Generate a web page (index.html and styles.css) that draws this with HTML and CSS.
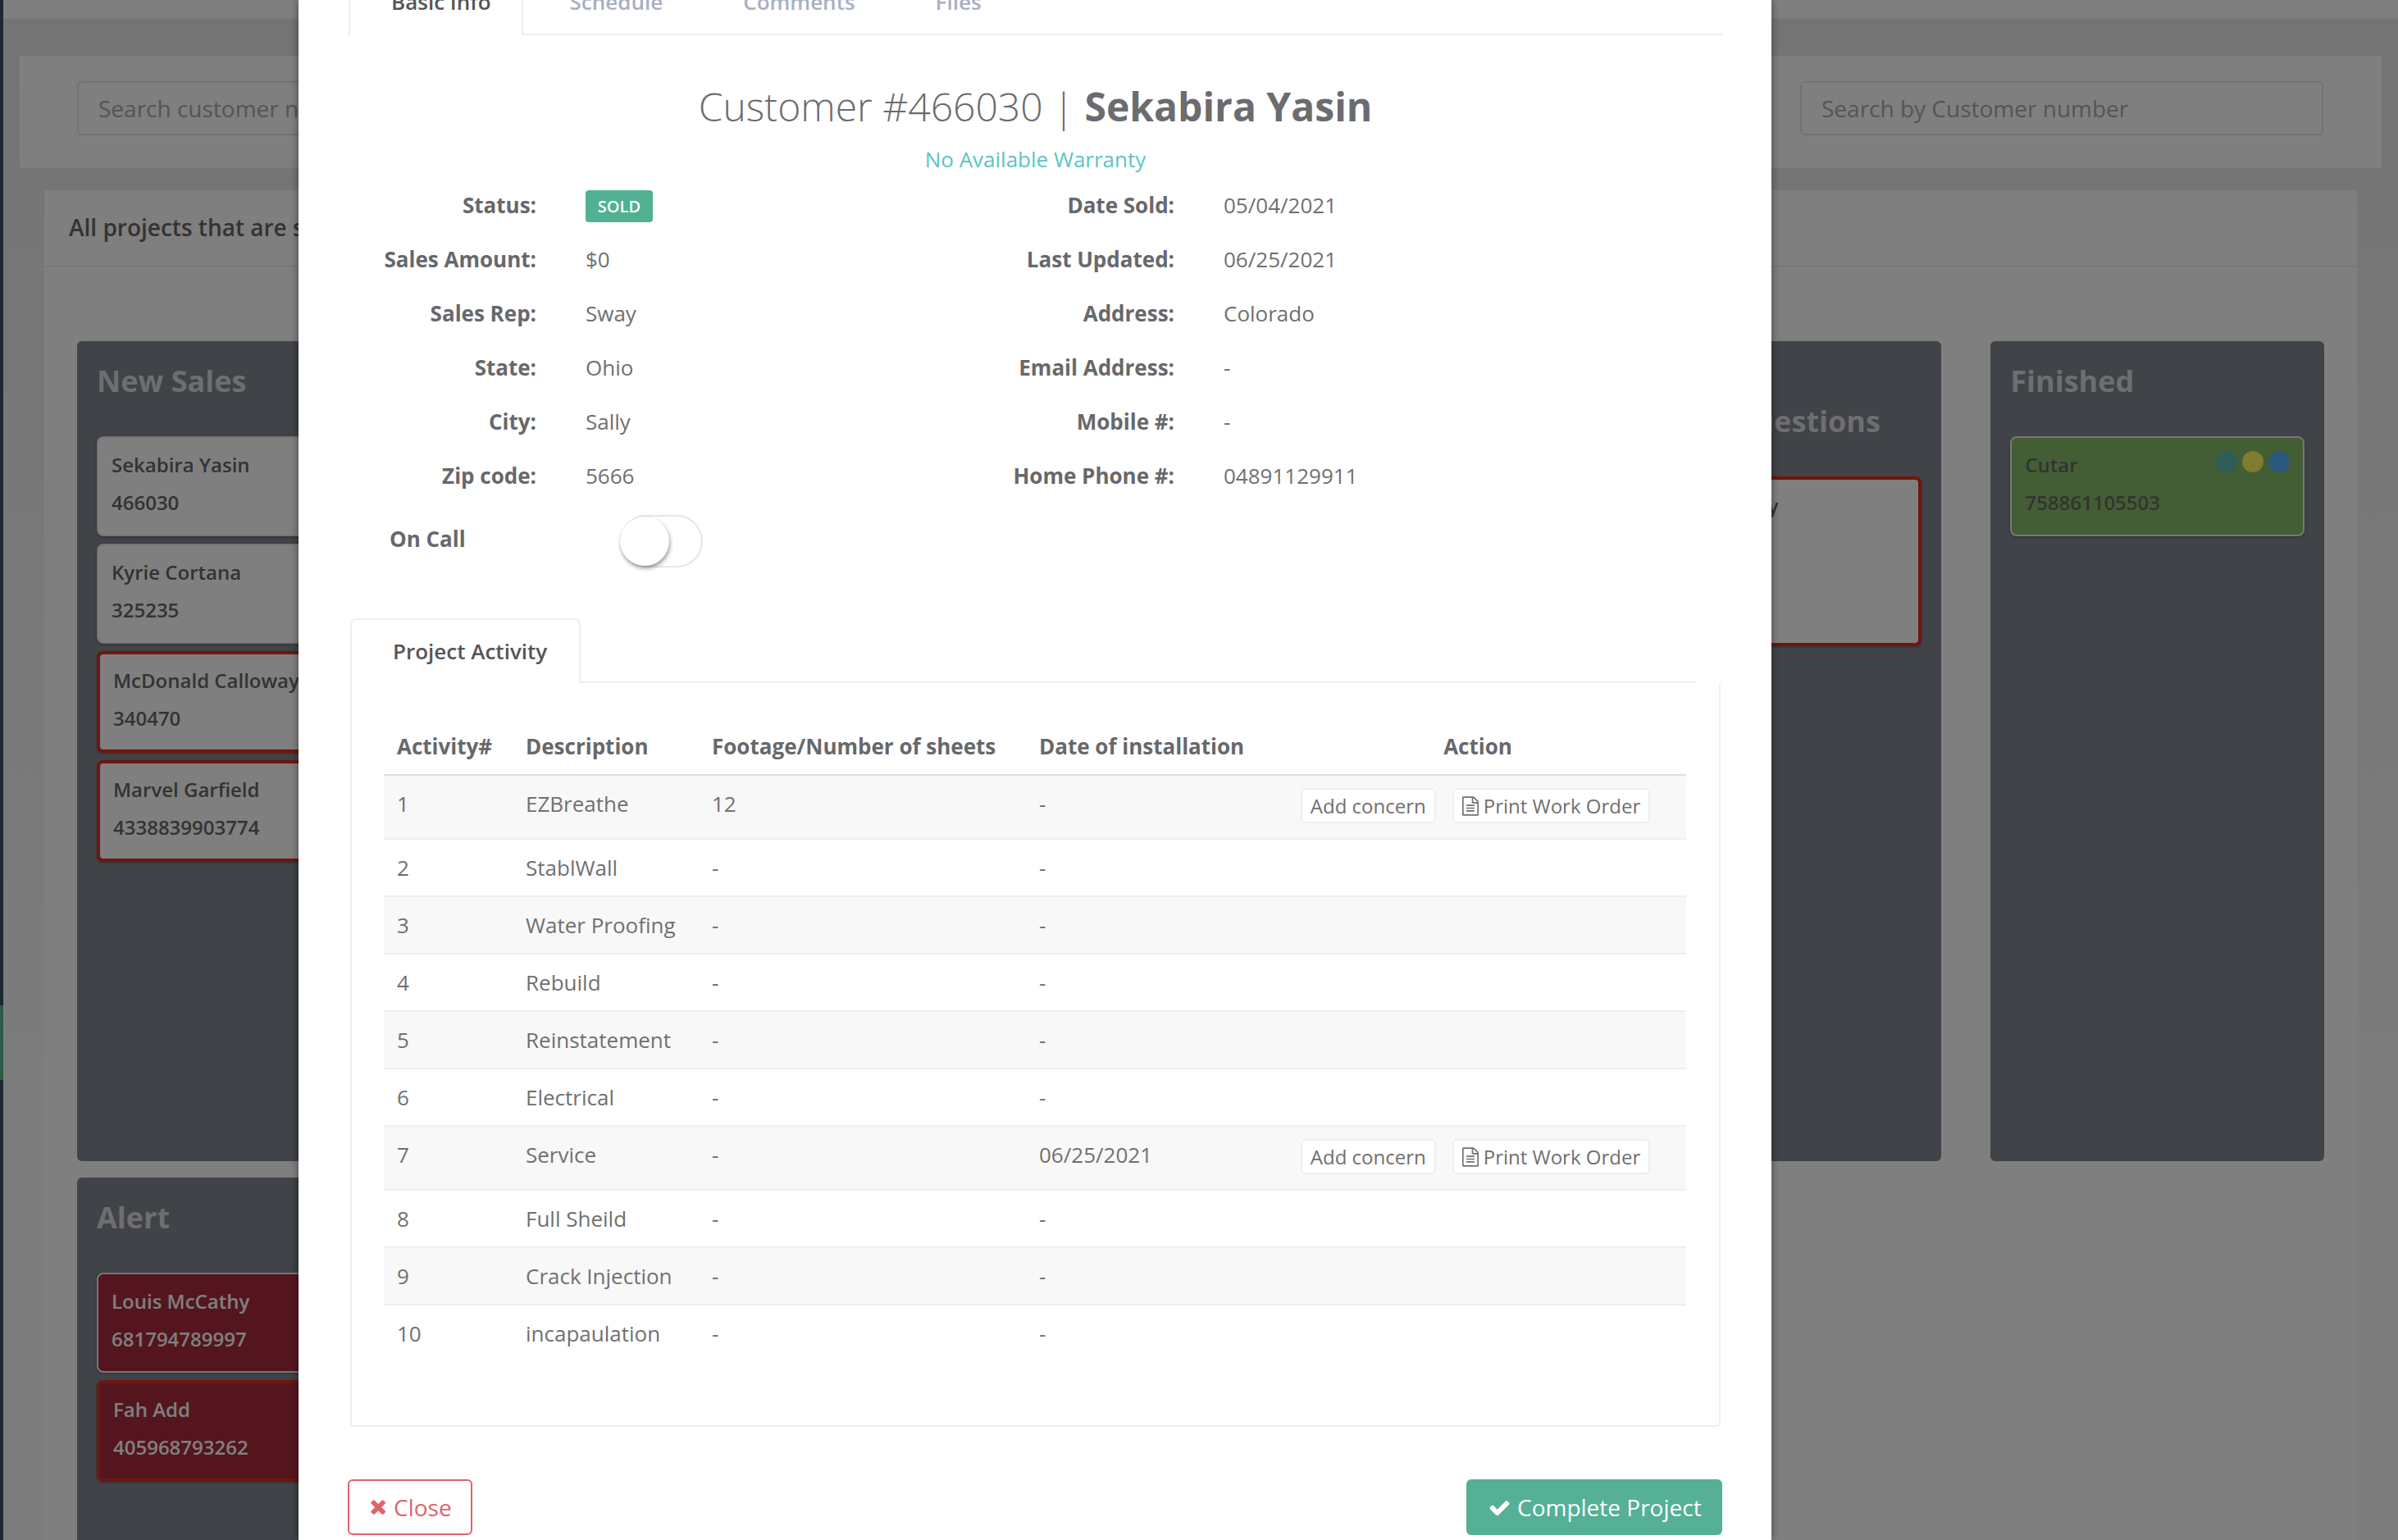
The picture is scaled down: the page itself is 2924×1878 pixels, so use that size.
FILE: index.html
```html
<!DOCTYPE html>
<html lang="en">
<head>
  <meta charset="UTF-8">
  <title>Projects</title>
  <link rel="stylesheet" href="styles.css">
</head>
<body>
  <div class="sidebar"><div class="sidebar-active"></div></div>
  <div class="content">
    <div class="topbar"></div>
    <div class="search-panel">
      <input class="search-input" type="text" placeholder="Search customer name">
      <input class="search-input" type="text" placeholder="Search by Customer number">
    </div>
    <div class="board-panel">
      <div class="board-header">All projects that are sold</div>
      <div class="board">
        <div class="column">
          <h3>New Sales</h3>
          <div class="card"><p>Sekabira Yasin</p><p>466030</p></div>
          <div class="card"><p>Kyrie Cortana</p><p>325235</p></div>
          <div class="card card-late"><p>McDonald Calloway</p><p>340470</p></div>
          <div class="card card-late"><p>Marvel Garfield</p><p>4338839903774</p></div>
        </div>
        <div class="column col-questions">
          <h3>Open<br>Repair Questions</h3>
          <div class="card card-late card-tall"><p>Jimmy Murray</p></div>
        </div>
        <div class="column col-finished">
          <h3>Finished</h3>
          <div class="card card-done">
            <div class="dots"><span class="dot dot-teal"></span><span class="dot dot-yellow"></span><span class="dot dot-blue"></span></div>
            <p>Cutar</p><p>758861105503</p>
          </div>
        </div>
        <div class="column col-alert">
          <h3>Alert</h3>
          <div class="card card-alert"><p>Louis McCathy</p><p>681794789997</p></div>
          <div class="card card-alert card-late"><p>Fah Add</p><p>405968793262</p></div>
        </div>
      </div>
    </div>
  </div>

  <div class="backdrop">
    <div class="modal">
      <ul class="tabs">
        <li class="tab active">Basic Info</li>
        <li class="tab">Schedule</li>
        <li class="tab">Comments</li>
        <li class="tab">Files</li>
      </ul>

      <h2 class="customer-title">Customer #466030 | <strong>Sekabira Yasin</strong></h2>
      <p class="warranty">No Available Warranty</p>

      <div class="info">
        <div class="info-row"><span class="info-label">Status:</span><span class="badge">SOLD</span></div>
        <div class="info-row"><span class="info-label">Date Sold:</span><span>05/04/2021</span></div>
        <div class="info-row"><span class="info-label">Sales Amount:</span><span>$0</span></div>
        <div class="info-row"><span class="info-label">Last Updated:</span><span>06/25/2021</span></div>
        <div class="info-row"><span class="info-label">Sales Rep:</span><span>Sway</span></div>
        <div class="info-row"><span class="info-label">Address:</span><span>Colorado</span></div>
        <div class="info-row"><span class="info-label">State:</span><span>Ohio</span></div>
        <div class="info-row"><span class="info-label">Email Address:</span><span>-</span></div>
        <div class="info-row"><span class="info-label">City:</span><span>Sally</span></div>
        <div class="info-row"><span class="info-label">Mobile #:</span><span>-</span></div>
        <div class="info-row"><span class="info-label">Zip code:</span><span>5666</span></div>
        <div class="info-row"><span class="info-label">Home Phone #:</span><span>04891129911</span></div>
      </div>

      <div class="on-call">
        <span class="on-call-label">On Call</span>
        <span class="switch"><span class="knob"></span></span>
      </div>

      <div class="activity-tabs"><div class="activity-tab">Project Activity</div></div>
      <div class="activity-panel">
        <table class="activity">
          <thead>
            <tr><th class="c-num">Activity#</th><th class="c-desc">Description</th><th class="c-foot">Footage/Number of sheets</th><th class="c-date">Date of installation</th><th class="c-action">Action</th></tr>
          </thead>
          <tbody>
            <tr>
              <td>1</td><td>EZBreathe</td><td>12</td><td>-</td>
              <td class="c-action"><div class="actions">
                <span class="btn-small">Add concern</span>
                <span class="btn-small"><svg class="icon-file" viewBox="128 0 1536 1792"><path d="M1596 380q28 28 48 76t20 88v1152q0 40-28 68t-68 28h-1344q-40 0-68-28t-28-68v-1600q0-40 28-68t68-28h896q40 0 88 20t76 48zm-444-244v376h376q-10-29-22-41l-313-313q-12-12-41-22zm384 1528v-1024h-416q-40 0-68-28t-28-68v-416h-768v1536h1280zm-1024-864q0-14 9-23t23-9h704q14 0 23 9t9 23v64q0 14-9 23t-23 9h-704q-14 0-23-9t-9-23v-64zm736 224q14 0 23 9t9 23v64q0 14-9 23t-23 9h-704q-14 0-23-9t-9-23v-64q0-14 9-23t23-9h704zm0 256q14 0 23 9t9 23v64q0 14-9 23t-23 9h-704q-14 0-23-9t-9-23v-64q0-14 9-23t23-9h704z"/></svg>Print Work Order</span>
              </div></td>
            </tr>
            <tr><td>2</td><td>StablWall</td><td>-</td><td>-</td><td></td></tr>
            <tr><td>3</td><td>Water Proofing</td><td>-</td><td>-</td><td></td></tr>
            <tr><td>4</td><td>Rebuild</td><td>-</td><td>-</td><td></td></tr>
            <tr><td>5</td><td>Reinstatement</td><td>-</td><td>-</td><td></td></tr>
            <tr><td>6</td><td>Electrical</td><td>-</td><td>-</td><td></td></tr>
            <tr>
              <td>7</td><td>Service</td><td>-</td><td>06/25/2021</td>
              <td class="c-action"><div class="actions">
                <span class="btn-small">Add concern</span>
                <span class="btn-small"><svg class="icon-file" viewBox="128 0 1536 1792"><path d="M1596 380q28 28 48 76t20 88v1152q0 40-28 68t-68 28h-1344q-40 0-68-28t-28-68v-1600q0-40 28-68t68-28h896q40 0 88 20t76 48zm-444-244v376h376q-10-29-22-41l-313-313q-12-12-41-22zm384 1528v-1024h-416q-40 0-68-28t-28-68v-416h-768v1536h1280zm-1024-864q0-14 9-23t23-9h704q14 0 23 9t9 23v64q0 14-9 23t-23 9h-704q-14 0-23-9t-9-23v-64zm736 224q14 0 23 9t9 23v64q0 14-9 23t-23 9h-704q-14 0-23-9t-9-23v-64q0-14 9-23t23-9h704zm0 256q14 0 23 9t9 23v64q0 14-9 23t-23 9h-704q-14 0-23-9t-9-23v-64q0-14 9-23t23-9h704z"/></svg>Print Work Order</span>
              </div></td>
            </tr>
            <tr><td>8</td><td>Full Sheild</td><td>-</td><td>-</td><td></td></tr>
            <tr><td>9</td><td>Crack Injection</td><td>-</td><td>-</td><td></td></tr>
            <tr><td>10</td><td>incapaulation</td><td>-</td><td>-</td><td></td></tr>
          </tbody>
        </table>
      </div>

      <div class="modal-footer">
        <span class="btn btn-close"><svg class="icon-times" viewBox="214 352 1276 1202"><path d="M1490 1322q0 40-28 68l-136 136q-28 28-68 28t-68-28l-294-294-294 294q-28 28-68 28t-68-28l-136-136q-28-28-28-68t28-68l294-294-294-294q-28-28-28-68t28-68l136-136q28-28 68-28t68 28l294 294 294-294q28-28 68-28t68 28l136 136q28 28 28 68t-28 68l-294 294 294 294q28 28 28 68z"/></svg>Close</span>
        <span class="btn btn-complete"><svg class="icon-check" viewBox="121 270 1550 1216"><path d="M1671 566q0 40-28 68l-724 724-136 136q-28 28-68 28t-68-28l-136-136-362-362q-28-28-28-68t28-68l136-136q28-28 68-28t68 28l294 295 656-657q28-28 68-28t68 28l136 136q28 28 28 68z"/></svg>Complete Project</span>
      </div>
    </div>
  </div>
</body>
</html>
```

FILE: styles.css
```css
* {
  box-sizing: border-box;
}
body {
  margin: 0;
  width: 2924px;
  height: 1878px;
  overflow: hidden;
  display: flex;
  position: relative;
  font-family: "Open Sans", sans-serif;
  font-size: 26px;
  color: #666;
  background: #fff;
}

/* page behind the modal */
.sidebar {
  width: 4px;
  flex: none;
  background: #3f5064;
}
.sidebar-active {
  margin-top: 1226px;
  height: 91px;
  background: #57b98c;
}
.content {
  flex: 1;
  min-width: 0;
  height: 1878px;
  overflow: hidden;
  background: linear-gradient(#e8e8e8, #f8f8f8 70%);
}
.topbar {
  height: 24px;
  background: #fff;
  border-bottom: 2px solid #eee;
}
.search-panel {
  margin: 44px 20px 0;
  height: 138px;
  padding: 31px 71px 0 70px;
  display: flex;
  justify-content: space-between;
  background: #fff;
  border: 2px solid #f2f2f2;
  border-width: 0 0 2px;
}
.search-input {
  width: 638px;
  height: 66px;
  padding: 0 24px;
  font: 28px "Open Sans", sans-serif;
  color: #666;
  background: #fff;
  border: 2px solid #e4e4e4;
  border-radius: 6px;
}
.search-input::placeholder {
  color: #aaa;
  opacity: 1;
}
.board-panel {
  margin: 26px 50px 0;
  height: 1646px;
  overflow: hidden;
  background: #fff;
}
.board-header {
  height: 94px;
  padding: 26px 30px 0;
  font-size: 28px;
  font-weight: 600;
  line-height: 38px;
  color: #666;
  border-bottom: 2px solid #eee;
}
.board {
  margin-top: 90px;
  padding: 0 40px;
  display: grid;
  grid-template-columns: repeat(6, 1fr);
  grid-template-rows: 1000px 442px;
  gap: 20px 60px;
}
.column {
  padding: 24px;
  background: #81868e;
  border-radius: 6px;
}
.col-questions { grid-column: 5; }
.col-finished { grid-column: 6; }
.col-alert {
  grid-column: 1;
  grid-row: 2;
  border-radius: 6px 6px 0 0;
}
.column h3 {
  margin: 0 0 43px;
  font-size: 36px;
  font-weight: 700;
  line-height: 49px;
  color: #dcdde0;
}
.card {
  position: relative;
  height: 122px;
  margin-bottom: 9px;
  padding: 10px 16px;
  font-size: 24px;
  font-weight: 600;
  color: #666;
  background: #fff;
  border: 2px solid #e8e8e8;
  border-radius: 8px;
  box-shadow: 0 1px 3px rgba(0,0,0,0.3);
}
.card p {
  margin: 0;
  line-height: 46px;
}
.card-late {
  padding-top: 9px;
  border: 4px solid #e02a1e;
  height: 124px;
}
.card-tall {
  height: 207px;
}
.card-done {
  background: #87bd69;
  border-color: #eee;
}
.card-alert {
  color: #fff;
  background: #a82a3c;
  border-color: #eee;
}
.card-alert.card-late {
  border-color: #e02a1e;
}
.dots {
  position: absolute;
  top: 16px;
  right: 16px;
  display: flex;
  gap: 6px;
}
.dot {
  width: 26px;
  height: 26px;
  border-radius: 50%;
}
.dot-teal { background: #56beb0; }
.dot-yellow { background: #fcf85e; }
.dot-blue { background: #56b0ff; }

/* modal */
.backdrop {
  position: absolute;
  top: 0;
  left: 0;
  width: 100%;
  height: 100%;
  background: rgba(0,0,0,0.5);
}
.modal {
  width: 1796px;
  height: 100%;
  margin-left: 364px;
  padding: 0 60px 0 61px;
  overflow: hidden;
  background: #fff;
  box-shadow: 0 0 10px rgba(0,0,0,0.45);
}
.tabs {
  margin: -17px 0 0;
  padding: 0;
  list-style: none;
  display: flex;
  border-bottom: 2px solid #eee;
}
.tab {
  padding: 0 49px 20px;
  font-size: 26px;
  font-weight: 600;
  line-height: 38px;
  color: #a8afc2;
}
.tab.active {
  margin-bottom: -2px;
  padding: 0 37px 20px 50px;
  margin-right: 8px;
  color: #555;
  background: #fff;
  border: 2px solid #eee;
  border-width: 0 2px;
}
.customer-title {
  margin: 54px 0 10px;
  font-size: 48px;
  font-weight: 300;
  line-height: 66px;
  text-align: center;
  color: #6b6c6f;
}
.customer-title strong {
  font-weight: 700;
}
.warranty {
  margin: 0;
  font-size: 26px;
  line-height: 42px;
  text-align: center;
  color: #5cc4c4;
}
.info {
  margin-top: 2px;
  display: grid;
  grid-template-columns: 778px 1fr;
}
.info-row {
  height: 66px;
  display: flex;
  align-items: center;
  color: #707070;
}
.info-label {
  width: 229px;
  margin-right: 60px;
  font-weight: 700;
  text-align: right;
  color: #67686b;
}
.badge {
  width: 82px;
  height: 39px;
  margin-top: 3px;
  font-size: 20px;
  font-weight: 600;
  line-height: 39px;
  text-align: center;
  color: #fff;
  background: #52b193;
  border-radius: 4px;
}
.on-call {
  margin-top: 15px;
  height: 64px;
  display: flex;
  align-items: center;
}
.on-call-label {
  width: 331px;
  padding: 0 0 6px 50px;
  font-weight: 700;
  color: #67686b;
}
.switch {
  width: 101px;
  height: 64px;
  padding: 2px 0 0 1px;
  background: #fff;
  border: 2px solid #e6e6e6;
  border-radius: 32px;
}
.knob {
  display: block;
  width: 60px;
  height: 60px;
  margin: -2px 0 0 -3px;
  background: #fff;
  border-radius: 50%;
  box-shadow: 1px 3px 5px rgba(0,0,0,0.4);
}
.activity-tabs {
  margin: 62px 32px 0 2px;
  border-bottom: 2px solid #eee;
}
.activity-tab {
  width: 281px;
  height: 79px;
  margin-bottom: -2px;
  padding-left: 50px;
  font-weight: 600;
  line-height: 76px;
  color: #555;
  background: #fff;
  border: 2px solid #eee;
  border-bottom: 0;
  border-radius: 8px 8px 0 0;
}
.activity-panel {
  margin: 0 2px;
  height: 907px;
  padding: 43px 40px 0 39px;
  border: 2px solid #eee;
  border-top: 0;
  border-radius: 0 0 4px 4px;
}
.activity {
  width: 100%;
  table-layout: fixed;
  border-collapse: separate;
  border-spacing: 0;
}
.c-num { width: 157px; }
.c-desc { width: 227px; }
.c-foot { width: 399px; }
.c-date { width: 297px; }
.activity th,
.activity td {
  padding: 15px 16px;
  line-height: 38px;
  text-align: left;
  vertical-align: top;
  white-space: nowrap;
}
.activity th {
  font-weight: 700;
  color: #67686b;
}
.activity th.c-action {
  text-align: center;
}
.activity td {
  border-top: 2px solid #eee;
  color: #707070;
}
.activity tbody tr:first-child td {
  border-top-color: #ddd;
}
.activity tbody tr:nth-child(odd) {
  background: #f8f8f8;
}
.activity td.c-action {
  padding: 15px 0;
}
.actions {
  height: 46px;
  padding-right: 6px;
  display: flex;
  justify-content: center;
  gap: 20px;
}
.btn-small {
  height: 43px;
  padding: 0 10px;
  display: inline-flex;
  align-items: center;
  gap: 6px;
  font-size: 24px;
  color: #707070;
  background: #fff;
  border: 2px solid #eee;
  border-radius: 6px;
}
.icon-file {
  width: 20px;
  height: 24px;
  fill: #707070;
}
.modal-footer {
  margin: 64px 0 0 -1px;
  display: flex;
  justify-content: space-between;
}
.btn {
  height: 68px;
  display: inline-flex;
  align-items: center;
  font-size: 28px;
  border-radius: 6px;
}
.btn-close {
  width: 152px;
  padding-left: 25px;
  gap: 10px;
  color: #e0636b;
  border: 2px solid #e0636b;
}
.btn-complete {
  width: 312px;
  padding-left: 28px;
  gap: 9px;
  color: #fff;
  background: #55b095;
}
.icon-times {
  width: 19px;
  height: 18px;
  fill: #e0636b;
}
.icon-check {
  width: 25px;
  height: 19px;
  fill: #fff;
}
```
